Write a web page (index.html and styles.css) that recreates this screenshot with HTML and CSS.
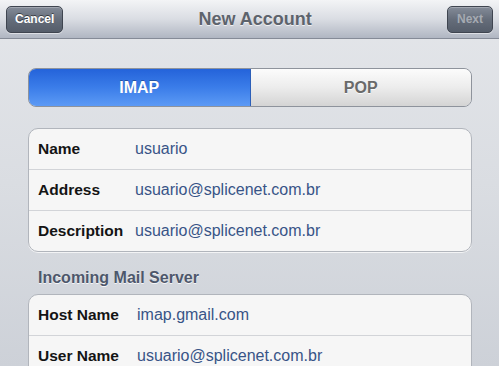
FILE: index.html
```html
<!DOCTYPE html>
<html lang="en">
<head>
    <meta charset="UTF-8">
    <meta name="viewport" content="width=device-width, initial-scale=1.0">
    <title>New Account</title>
    <link rel="stylesheet" href="styles.css">
</head>
<body>
    <div class="navbar">
        <button class="nav-btn">Cancel</button>
        <h1 class="nav-title">New Account</h1>
        <button class="nav-btn disabled">Next</button>
    </div>
    <div class="content">
        <div class="segmented">
            <div class="segment active">IMAP</div>
            <div class="segment">POP</div>
        </div>

        <div class="group">
            <div class="row">
                <span class="label">Name</span>
                <span class="value">usuario</span>
            </div>
            <div class="row">
                <span class="label">Address</span>
                <span class="value">usuario@splicenet.com.br</span>
            </div>
            <div class="row">
                <span class="label">Description</span>
                <span class="value">usuario@splicenet.com.br</span>
            </div>
        </div>

        <h2 class="group-header">Incoming Mail Server</h2>
        <div class="group server">
            <div class="row">
                <span class="label">Host Name</span>
                <span class="value">imap.gmail.com</span>
            </div>
            <div class="row">
                <span class="label">User Name</span>
                <span class="value">usuario@splicenet.com.br</span>
            </div>
        </div>
    </div>
</body>
</html>
```

FILE: styles.css
```css
body, html {
    margin: 0;
    padding: 0;
    height: 100%;
    overflow: hidden;
    font-family: 'Liberation Sans', Arial, Helvetica, sans-serif;
}

body {
    background: linear-gradient(to bottom, #e4e6ea 0%, #dadde2 50%, #cdd1d8 100%);
}

.navbar {
    display: flex;
    align-items: center;
    justify-content: space-between;
    height: 38px;
    padding: 0 6px;
    background: linear-gradient(to bottom, #f3f4f6 0%, #dadde3 50%, #b0b6c2 100%);
    border-bottom: 1px solid #858b97;
    box-sizing: content-box;
}

.nav-title {
    margin: 0;
    font-size: 18px;
    font-weight: bold;
    color: #5d636c;
    text-shadow: 0 1px 0 rgba(255, 255, 255, 0.7);
}

.nav-btn {
    height: 27px;
    padding: 0 8px;
    border: 1px solid #3f4550;
    border-radius: 5px;
    background: linear-gradient(to bottom, #848b98 0%, #656d7a 50%, #555d6a 100%);
    box-shadow: inset 0 1px 0 rgba(255, 255, 255, 0.25), 0 1px 0 rgba(255, 255, 255, 0.5);
    color: #ffffff;
    font-family: 'Liberation Sans', Arial, sans-serif;
    font-size: 12px;
    font-weight: bold;
    text-shadow: 0 -1px 0 rgba(0, 0, 0, 0.5);
}

.nav-btn.disabled {
    color: #a5aab2;
    text-shadow: none;
    padding: 0 9px;
}

.content {
    padding: 29px 27px 0 28px;
}

.segmented {
    display: flex;
    height: 37px;
    border: 1px solid #8e939c;
    border-radius: 8px;
    overflow: hidden;
}

.segment {
    flex: 1;
    display: flex;
    align-items: center;
    justify-content: center;
    font-size: 16px;
    font-weight: bold;
    color: #6a6a6a;
    background: linear-gradient(to bottom, #fcfcfc 0%, #ececec 50%, #d4d4d4 100%);
    text-shadow: 0 1px 0 rgba(255, 255, 255, 0.8);
}

.segment.active {
    color: #ffffff;
    background: linear-gradient(to bottom, #2463da 0%, #3b7de9 50%, #5c9af5 100%);
    text-shadow: 0 -1px 0 rgba(0, 0, 0, 0.3);
    border-right: 1px solid #2c5fb8;
}

.group {
    margin-top: 21px;
    background-color: #f6f6f6;
    border: 1px solid #b1b5bc;
    border-radius: 10px;
    box-shadow: 0 1px 0 rgba(255, 255, 255, 0.7);
}

.row {
    display: flex;
    align-items: center;
    height: 40px;
    padding-left: 9px;
    border-top: 1px solid #d2d4d8;
}

.row:first-child {
    border-top: none;
}

.label {
    width: 97px;
    flex-shrink: 0;
    font-size: 15.5px;
    font-weight: bold;
    color: #141414;
}

.value {
    font-size: 16px;
    color: #385487;
}

.group-header {
    margin: 17px 0 0 10px;
    height: 25px;
    font-size: 16px;
    font-weight: bold;
    color: #4d576b;
    text-shadow: 0 1px 0 rgba(255, 255, 255, 0.8);
}

.group.server {
    margin-top: 0;
}

.server .label {
    width: 99px;
}
```
